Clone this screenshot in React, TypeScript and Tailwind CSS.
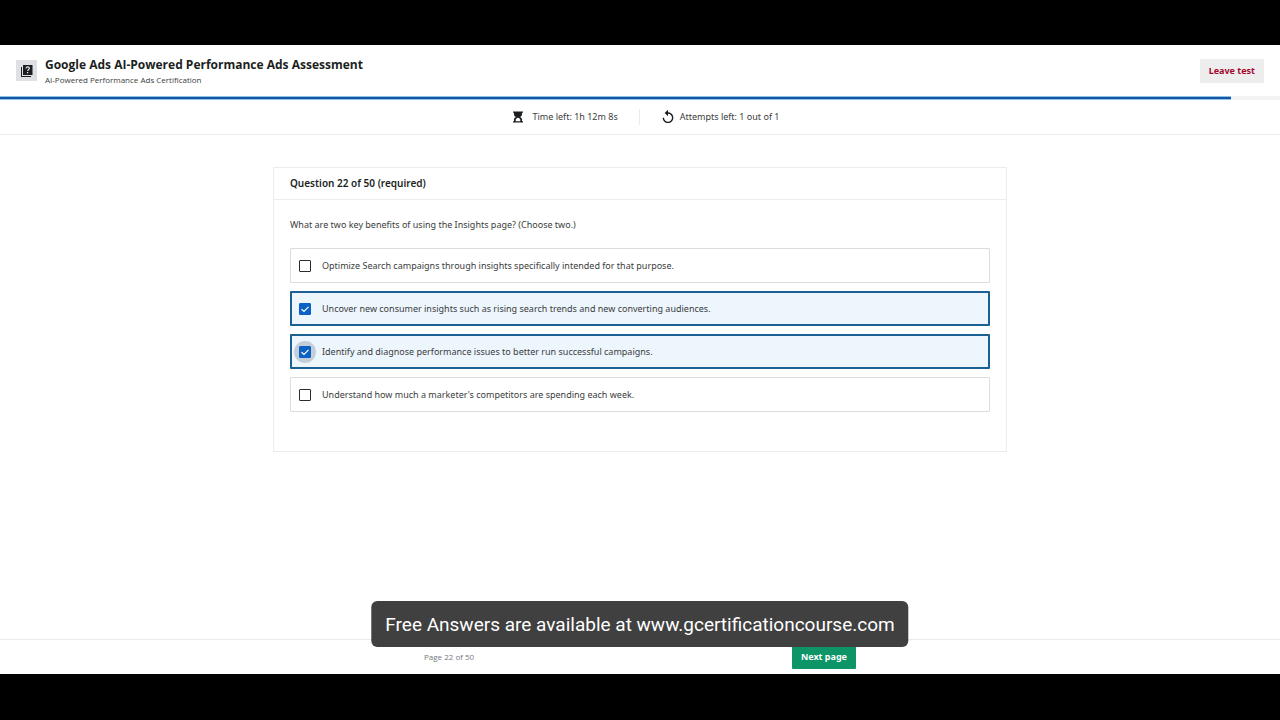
import { useState } from "react";

const OPTIONS = [
  "Optimize Search campaigns through insights specifically intended for that purpose.",
  "Uncover new consumer insights such as rising search trends and new converting audiences.",
  "Identify and diagnose performance issues to better run successful campaigns.",
  "Understand how much a marketer's competitors are spending each week.",
];

function QuizIcon() {
  return (
    <svg viewBox="0 0 12 12" className="size-3" aria-hidden="true">
      <path fill="#1c1f22" d="M0 2h1v9h9v1H0z" />
      <rect fill="#1c1f22" x="2" width="9.500" height="10" />
      <path d="M5 3.500c0-1 .8-1.600 1.700-1.600s1.700.6 1.700 1.400c0 1.100-1.700 1.300-1.700 2.700" fill="none" stroke="#f0f1f3" strokeWidth="1.100" />
      <rect fill="#f0f1f3" x="6" y="7" width="1.200" height="1.200" />
    </svg>
  );
}

function HourglassIcon() {
  return (
    <svg viewBox="0 0 12 14" className="h-[14px] w-3" aria-hidden="true">
      <path
        fill="#1c1f22"
        fillRule="evenodd"
        d="M1 1.500h10v1.300h-1V4.500c0 1.200-.8 2-1.900 2.500 1.100.5 1.900 1.300 1.900 2.500v1.700h1v1.300H1v-1.300h1V9.500C2 8.300 2.800 7.500 3.900 7 2.800 6.500 2 5.700 2 4.500V2.800H1zM6 7.700c-1.500.4-2.300 1.200-2.300 2.400v1.100h4.600v-1.100c0-1.200-.8-2-2.300-2.400z"
      />
    </svg>
  );
}

function ReplayIcon() {
  return (
    <svg viewBox="0 0 24 24" className="size-4" aria-hidden="true">
      <path
        fill="#1c1f22"
        d="M12 5V1L7 6l5 5V7c3.310 0 6 2.690 6 6s-2.690 6-6 6-6-2.690-6-6H4c0 4.420 3.580 8 8 8s8-3.580 8-8-3.580-8-8-8z"
      />
    </svg>
  );
}

function Option({ text, checked, focused, onToggle }: { text: string; checked: boolean; focused: boolean; onToggle: () => void }) {
  return (
    <label
      className={
        checked
          ? "flex h-[35px] cursor-pointer items-center gap-[11px] rounded-[1px] border-2 border-[#1a6092] bg-[#edf5fd] pl-[7px]"
          : "flex h-[35px] cursor-pointer items-center gap-[11px] rounded-[1px] border border-[#dcdcdc] bg-white pl-2"
      }
    >
      <span className={focused ? "grid size-3 place-items-center rounded-full bg-[#c3ced9] ring-[5px] ring-[#c3ced9]" : "grid size-3 place-items-center"}>
        <input
          type="checkbox"
          checked={checked}
          onChange={onToggle}
          className="col-start-1 row-start-1 size-3 appearance-none rounded-[1px] border border-[#2a2d30] bg-white outline-none checked:border-[#0b62c4] checked:bg-[#0b62c4]"
        />
        {checked && (
          <svg viewBox="0 0 12 12" className="pointer-events-none z-10 col-start-1 row-start-1 size-3" aria-hidden="true">
            <path d="M2.500 6.200 5 8.500 9.500 3.800" fill="none" stroke="#fff" strokeWidth="1.200" />
          </svg>
        )}
      </span>
      <span>{text}</span>
    </label>
  );
}

export default function App() {
  const [selected, setSelected] = useState([false, true, true, false]);
  const toggle = (i: number) => setSelected(selected.map((v, j) => (j === i ? !v : v)));

  return (
    <div className="relative flex min-h-screen flex-col bg-black pt-[45px] pb-[46px] font-['Noto_Sans',sans-serif] text-[9px] leading-4 text-[#3a3d40]">
      <div className="flex grow flex-col bg-white">
        <header className="flex h-[51px] items-center gap-2 px-4">
          <span className="grid size-[21px] place-items-center bg-[#dfe0e3]">
            <QuizIcon />
          </span>
          <div className="grow pt-0.5">
            <h1 className="font-['Open_Sans',sans-serif] text-[12px] leading-4 font-bold text-[#1c1f22]">
              Google Ads AI-Powered Performance Ads Assessment
            </h1>
            <p className="font-['Open_Sans',sans-serif] text-[8px] leading-[14px]">AI-Powered Performance Ads Certification</p>
          </div>
          <button type="button" className="h-6 bg-[#ededed] px-[9px] font-bold text-[#a3082e]">
            Leave test
          </button>
        </header>

        <div role="progressbar" aria-label="Test progress" className="h-1 bg-[#f3f3f3]">
          <div className="h-full w-[96.2%] border-y border-[#8fc0ea] bg-[#1557a0]" />
        </div>

        <div className="flex h-[35px] items-center justify-center border-b border-[#ebebeb] pl-3">
          <div className="flex items-center gap-2 pr-[21px]">
            <HourglassIcon />
            <span>Time left: 1h 12m 8s</span>
          </div>
          <div className="flex items-center gap-1 border-l border-[#ebebeb] pl-5">
            <ReplayIcon />
            <span>Attempts left: 1 out of 1</span>
          </div>
        </div>

        <main className="grow px-4 pt-8">
          <section aria-labelledby="question" className="mx-auto max-w-[734px] border border-[#ececec]">
            <h2 className="h-8 border-b border-[#ececec] px-4 pt-[7px] text-[10px] leading-4 font-semibold text-[#1c1f22]">
              Question 22 of 50 (required)
            </h2>
            <div className="px-4 pt-[17px] pb-[39px]">
              <p id="question" className="mb-[15px]">
                What are two key benefits of using the Insights page? (Choose two.)
              </p>
              <div role="group" aria-labelledby="question" className="flex flex-col gap-2">
                {OPTIONS.map((text, i) => (
                  <Option key={text} text={text} checked={selected[i]} focused={i === 2} onToggle={() => toggle(i)} />
                ))}
              </div>
            </div>
          </section>
        </main>

        <footer className="border-t border-[#ebebeb]">
          <div className="mx-auto flex h-[34px] max-w-[432px] items-center justify-between">
            <span className="font-['Open_Sans',sans-serif] text-[8px] text-[#76797c]">Page 22 of 50</span>
            <button type="button" className="h-6 rounded-[1px] bg-[#0d9467] px-[9px] font-bold text-white">
              Next page
            </button>
          </div>
        </footer>
      </div>

      <div className="absolute bottom-[73px] left-1/2 -translate-x-1/2 rounded-md bg-[#404040] px-[14px] pt-[9px] pb-[7px] font-[Roboto,sans-serif] text-[19px] leading-[30px] whitespace-nowrap text-white">
        Free Answers are available at www.gcertificationcourse.com
      </div>
    </div>
  );
}
